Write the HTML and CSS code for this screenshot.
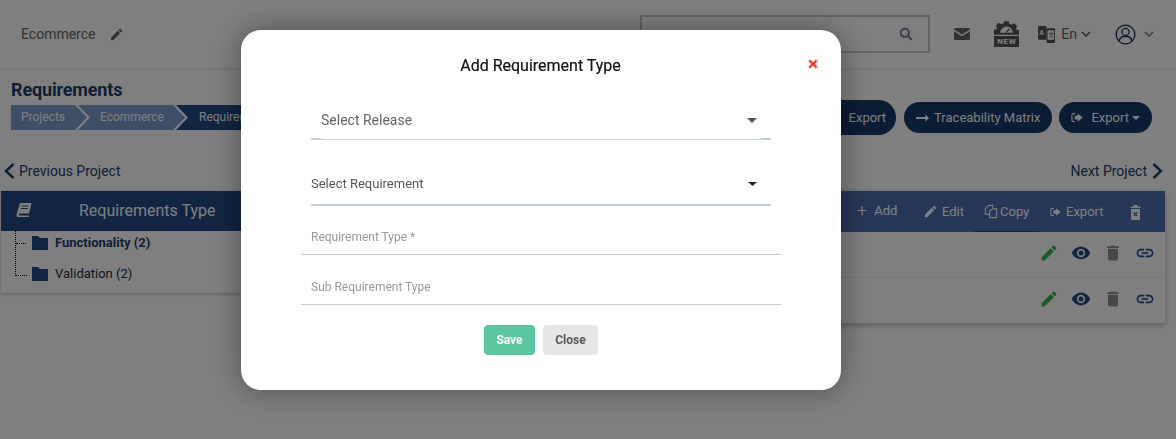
FILE: index.html
```html
<!DOCTYPE html>
<html lang="en">
<head>
<meta charset="utf-8">
<title>Requirements</title>
<link rel="stylesheet" href="styles.css">
</head>
<body>
<svg class="defs" width="0" height="0" aria-hidden="true">
  <symbol id="pencil" viewBox="0 0 24 24"><path d="M3 17.25V21h3.75L17.81 9.94l-3.75-3.75L3 17.25zM20.71 7.04a1 1 0 0 0 0-1.41l-2.34-2.34a1 1 0 0 0-1.41 0l-1.83 1.83 3.75 3.75 1.83-1.83z"/></symbol>
  <symbol id="folder" viewBox="0 0 16 14"><path d="M0 0h6l2 2h8v12H0z"/></symbol>
  <symbol id="exporti" viewBox="0 0 16 14"><path d="M5.500 1H3a2.500 2.500 0 0 0-2.500 2.500v7A2.500 2.500 0 0 0 3 13h2.500v-1.500H3a1 1 0 0 1-1-1v-7a1 1 0 0 1 1-1h2.500z"/><path d="M9 1.500 15.500 7 9 12.500V9.500H5v-5h4z"/></symbol>
  <symbol id="eye" viewBox="0 0 24 24"><path d="M12 4.500C7 4.500 2.730 7.610 1 12c1.730 4.390 6 7.500 11 7.500s9.270-3.110 11-7.500c-1.730-4.390-6-7.500-11-7.500zM12 17a5 5 0 1 1 0-10 5 5 0 0 1 0 10zm0-8a3 3 0 1 0 0 6 3 3 0 0 0 0-6z"/></symbol>
  <symbol id="trash" viewBox="0 0 24 24"><path d="M6 19a2 2 0 0 0 2 2h8a2 2 0 0 0 2-2V7H6v12zM19 4h-3.500l-1-1h-5l-1 1H5v2h14V4z"/></symbol>
  <symbol id="link" viewBox="0 0 24 24"><path d="M3.900 12A3.100 3.100 0 0 1 7 8.900h4V7H7a5 5 0 0 0 0 10h4v-1.900H7A3.100 3.100 0 0 1 3.900 12zM8 13h8v-2H8v2zm9-6h-4v1.900h4a3.100 3.100 0 0 1 0 6.200h-4V17h4a5 5 0 0 0 0-10z"/></symbol>
  <symbol id="caret" viewBox="0 0 10 6" preserveAspectRatio="none"><path d="M0 0h10L5 6z"/></symbol>
  <symbol id="chev" viewBox="0 0 10 6"><path d="M1 1l4 4 4-4" fill="none" stroke="currentColor" stroke-width="1.500"/></symbol>
</svg>

<div class="page">
  <header class="topbar">
    <div class="project">
      <span>Ecommerce</span>
      <svg class="ic14 grey"><use href="#pencil"/></svg>
    </div>
    <div class="top-right">
      <div class="search">
        <svg class="search-ic" viewBox="0 0 24 24"><circle cx="10" cy="10" r="7" fill="none" stroke="currentColor" stroke-width="3.500"/><path d="M15 15l7 7" stroke="currentColor" stroke-width="3.500"/></svg>
      </div>
      <svg class="mail" viewBox="0 0 16 12"><path d="M1.500 0h13A1.500 1.500 0 0 1 16 1.500L8 6.500 0 1.500A1.500 1.500 0 0 1 1.500 0zM0 3.300V10.500A1.500 1.500 0 0 0 1.500 12h13a1.500 1.500 0 0 0 1.500-1.500V3.300L8 8.300z"/></svg>
      <div class="newbadge">
        <svg class="gear" viewBox="0 0 26 14"><path d="M10.500 0h5l.5 2.500 2.500 1 2.500-1.500 3 3-1 2.500.5 1.500H26v5H0V8.500h2.500l.5-1.500-1-2.500 3-3 2.500 1.500 2.500-1z"/><path d="M6.500 12a6.500 6.500 0 0 1 13 0z" fill="#fff"/><path d="M12 11.500l3.500-4 1 1-3.500 3.500z"/></svg>
        <span>NEW</span>
      </div>
      <svg class="lang" viewBox="0 0 16 18"><rect x="0" y="1" width="8" height="13" rx="1"/><rect x="8" y="3" width="8" height="14" rx="1"/><rect x="9" y="5" width="6" height="9" fill="#fff"/><text x="1.300" y="9.500" class="lang-a">A</text><text x="10" y="11.500" class="lang-b">文</text></svg>
      <span class="lang-t">En</span>
      <svg class="chev"><use href="#chev"/></svg>
      <svg class="user" viewBox="0 0 24 24"><circle cx="12" cy="12" r="10.700" fill="none" stroke="currentColor" stroke-width="1.500"/><circle cx="12" cy="9" r="4" fill="none" stroke="currentColor" stroke-width="1.500"/><path d="M4.500 19.500c1-4 4-5.500 7.500-5.500s6.500 1.500 7.500 5.500" fill="none" stroke="currentColor" stroke-width="1.500"/></svg>
      <svg class="chev chev-u"><use href="#chev"/></svg>
    </div>
  </header>

  <section class="subhead">
    <div>
      <h1>Requirements</h1>
      <ol class="crumbs">
        <li class="crumb c1">Projects</li>
        <li class="crumb c2">Ecommerce</li>
        <li class="crumb c3">Requirements</li>
      </ol>
    </div>
    <div class="actions">
      <button class="pill pill-tall"><svg class="ic13"><use href="#exporti"/></svg>Export</button>
      <button class="pill pill-trace"><svg class="arrow" viewBox="0 0 14 8"><path d="M0 3h10V0l4 4-4 4V5H0z"/></svg>Traceability Matrix</button>
      <button class="pill"><svg class="ic13"><use href="#exporti"/></svg>Export<svg class="caret-s"><use href="#caret"/></svg></button>
    </div>
  </section>

  <nav class="pager">
    <a><svg class="pg" viewBox="0 0 11 16"><path d="M9.500 1 2 8l7.500 7" fill="none" stroke="currentColor" stroke-width="2.400"/></svg>Previous Project</a>
    <a>Next Project<svg class="pg" viewBox="0 0 11 16"><path d="M1.500 1 9 8l-7.500 7" fill="none" stroke="currentColor" stroke-width="2.400"/></svg></a>
  </nav>

  <main class="content">
    <aside class="tree-panel">
      <div class="tree-head">
        <svg class="book" viewBox="0 0 16 14"><path d="M4 0h11.500l-2.500 10.500H3.500L2.500 12.500H13V14H2A1.700 1.700 0 0 1 .500 12z"/><path d="M5.500 3h7M5 5.500h7" stroke="#224a85" stroke-width="1"/></svg>
        <span>Requirements Type</span>
      </div>
      <ul class="tree">
        <li class="tree-item strong"><svg class="folder"><use href="#folder"/></svg>Functionality (2)</li>
        <li class="tree-item"><svg class="folder"><use href="#folder"/></svg>Validation (2)</li>
      </ul>
    </aside>
    <section class="table-panel">
      <div class="tools">
        <span class="tool t-add"><span class="plus">+</span>Add</span>
        <span class="tool t-edit"><svg class="ic14"><use href="#pencil"/></svg>Edit</span>
        <span class="tool t-copy"><svg class="copy" viewBox="0 0 16 16"><path d="M5.500 1H10v4h4.500v10h-8V11H1.500V5zM10 1v4M6.500 11V7.500L10 5" fill="none" stroke="currentColor" stroke-width="1.200"/></svg>Copy</span>
        <span class="tool t-exp"><svg class="ic12"><use href="#exporti"/></svg>Export</span>
        <svg class="del" viewBox="0 0 14 18"><path d="M1 3h12v1.500H1zM4.500 1h5v2h-5zM2 5.500h10V17a1 1 0 0 1-1 1H3a1 1 0 0 1-1-1z"/><path d="M5 9.500l4 4M9 9.500l-4 4" stroke="#4f6fb0" stroke-width="1.500"/></svg>
      </div>
      <div class="row">
        <svg class="act green"><use href="#pencil"/></svg>
        <svg class="act navy"><use href="#eye"/></svg>
        <svg class="act dark"><use href="#trash"/></svg>
        <svg class="act navy"><use href="#link"/></svg>
      </div>
      <div class="row">
        <svg class="act green"><use href="#pencil"/></svg>
        <svg class="act navy"><use href="#eye"/></svg>
        <svg class="act dark"><use href="#trash"/></svg>
        <svg class="act navy"><use href="#link"/></svg>
      </div>
    </section>
  </main>
</div>

<div class="overlay"></div>

<div class="modal">
  <div class="modal-head">
    <h2>Add Requirement Type</h2>
    <svg class="close-x" viewBox="0 0 10 10"><path d="M1.300 1.300l7.400 7.400M8.700 1.300L1.300 8.700" stroke="currentColor" stroke-width="2.500"/></svg>
  </div>
  <div class="sel sel-release">
    <span>Select Release</span>
    <svg class="sel-caret"><use href="#caret"/></svg>
  </div>
  <div class="sel sel-req">
    <span>Select Requirement</span>
    <svg class="sel-caret"><use href="#caret"/></svg>
  </div>
  <div class="field f-first">Requirement Type *</div>
  <div class="field f-second">Sub Requirement Type</div>
  <div class="btns">
    <button class="btn save">Save</button>
    <button class="btn close">Close</button>
  </div>
</div>
</body>
</html>
```
FILE: styles.css
```css
* { box-sizing: border-box; }
html, body { margin: 0; padding: 0; }
body {
  width: 1176px;
  height: 439px;
  overflow: hidden;
  background: #fff;
  font-family: Roboto, "Liberation Sans", sans-serif;
  color: #333;
}
.defs { position: absolute; }
svg { display: block; flex: none; fill: currentColor; }
ul, ol { list-style: none; margin: 0; padding: 0; }
h1, h2 { margin: 0; }
button { font-family: inherit; border: 0; }

.page { height: 439px; }

.topbar {
  height: 69px;
  border-bottom: 1px solid #f0f0f0;
  box-shadow: 0 1px 3px rgba(0,0,0,.08);
  display: flex;
  justify-content: space-between;
  align-items: center;
  padding: 0 22px 0 21px;
}
.project { display: flex; align-items: center; gap: 14px; font-size: 14px; color: #666; }
.ic14 { width: 15px; height: 15px; }
.grey { color: #666; }
.top-right { display: flex; align-items: center; }
.search {
  width: 290px;
  height: 38px;
  border: 2px solid #c8c8c8;
  display: flex;
  align-items: center;
  justify-content: flex-end;
  padding-right: 15px;
  color: #7e7e9e;
}
.search-ic { width: 14px; height: 14px; }
.mail { width: 16px; height: 12px; margin-left: 24px; color: #666; }
.newbadge { width: 25px; margin-left: 24px; color: #555; }
.gear { width: 25px; height: 14px; margin: 0; }
.newbadge span {
  display: block;
  background: #555;
  color: #fff;
  font-size: 8px;
  font-weight: 700;
  line-height: 11px;
  letter-spacing: .6px;
  text-align: center;
  margin-top: 1px;
}
.lang { width: 17px; height: 19px; margin-left: 19px; color: #555; }
.lang-a { font-size: 6px; font-weight: 700; fill: #fff; }
.lang-b { font-family: "Noto Sans CJK SC", sans-serif; font-size: 5px; fill: #555; }
.lang-t { font-size: 14px; color: #666; margin-left: 6px; }
.chev { width: 10px; height: 6px; margin-left: 4px; color: #555; }
.user { width: 21px; height: 21px; margin-left: 24px; color: #1b3258; }
.chev-u { margin-left: 8px; color: #777; }

.subhead {
  display: flex;
  justify-content: space-between;
  padding: 10px 24px 0 11px;
  height: 93px;
}
h1 { font-size: 18px; font-weight: 700; line-height: 21px; color: #1c3d6e; letter-spacing: -.15px; }
.crumbs { display: flex; margin-top: 5px; }
.crumb {
  height: 25px;
  line-height: 25px;
  font-size: 12px;
  color: #fff;
  background: #7a9ccc;
}
.c1 {
  width: 76px;
  padding-left: 10px;
  clip-path: polygon(0 0, calc(100% - 12px) 0, 100% 50%, calc(100% - 12px) 100%, 0 100%);
}
.c2 {
  width: 107px;
  margin-left: -9px;
  padding-left: 22px;
  clip-path: polygon(0 0, calc(100% - 12px) 0, 100% 50%, calc(100% - 12px) 100%, 0 100%, 12px 50%);
}
.c3 {
  width: 130px;
  margin-left: -9px;
  padding-left: 23px;
  background: #224a85;
  clip-path: polygon(0 0, 100% 0, 100% 100%, 0 100%, 12px 50%);
}

.actions { display: flex; align-items: center; gap: 8px; margin-top: 21px; height: 35px; }
.pill {
  height: 31px;
  border-radius: 16px;
  background: #16386a;
  color: #fff;
  font-size: 13px;
  display: flex;
  align-items: center;
  gap: 8px;
  padding: 0 12px;
}
.pill-tall { height: 35px; border-radius: 18px; padding: 0 10px 0 60px; }
.pill-trace { gap: 5px; margin-right: -1px; }
.ic13 { width: 12px; height: 11px; }
.arrow { width: 13px; height: 8px; }
.caret-s { width: 8px; height: 4px; margin-left: -5px; }

.pager {
  display: flex;
  justify-content: space-between;
  align-items: center;
  height: 20px;
  padding: 0 13px 0 4px;
  margin-top: -1px;
  font-size: 14px;
  color: #1d3c6b;
  margin-bottom: 10px;
}
.pager a { display: flex; align-items: center; gap: 4px; }
.pager a:last-child { gap: 5px; }
.pg { width: 11px; height: 16px; }

.content { display: flex; padding: 0 11px 0 1px; align-items: flex-start; }
.tree-panel { width: 300px; box-shadow: 0 1px 4px rgba(0,0,0,.25); background: #fff; border-radius: 3px 0 0 0; }
.tree-head {
  height: 40px;
  background: #224a85;
  color: #fff;
  display: flex;
  align-items: center;
  padding: 0 0 2px 15px;
  font-size: 16px;
}
.book { width: 16px; height: 14px; color: #fff; }
.tree-head span { margin-left: 47px; }
.tree {
  padding: 4px 0 0 31px;
  position: relative;
  height: 62px;
  font-size: 13px;
  color: #1e2a3a;
  display: flex;
  flex-direction: column;
  gap: 15px;
}
.tree::before {
  content: "";
  position: absolute;
  left: 14px;
  top: 0;
  width: 11px;
  height: 44px;
  border-left: 1px dotted #000;
  border-bottom: 1px dotted #000;
}
.tree::after {
  content: "";
  position: absolute;
  left: 15px;
  top: 12px;
  width: 10px;
  border-top: 1px dotted #000;
}
.tree-item { display: flex; align-items: center; gap: 7px; height: 16px; line-height: 16px; }
.tree-item.strong { font-weight: 700; color: #1c3d6e; }
.folder { width: 16px; height: 14px; color: #224a85; }

.table-panel { flex: 1; box-shadow: 0 2px 6px rgba(0,0,0,.3); background: #fff; border-radius: 0 3px 0 0; }
.tools {
  height: 41px;
  background: #4f6fb0;
  color: #fff;
  display: flex;
  align-items: center;
  padding-left: 556px;
  font-size: 13px;
}
.tool { display: flex; align-items: center; height: 41px; }
.t-add { width: 66px; gap: 7px; padding-bottom: 2px; }
.plus { font-size: 18px; font-weight: 300; line-height: 18px; }
.t-edit { width: 51px; gap: 4px; padding-bottom: 1px; }
.t-copy { width: 65px; gap: 2px; padding: 0 0 1px 10px; box-shadow: inset 0 -1px 0 #224a85; }
.copy { width: 14px; height: 15px; fill: none; }
.t-exp { width: 90px; padding: 0 0 0 11px; gap: 5px; }
.ic12 { width: 11px; height: 10px; }
.del { width: 13px; height: 16px; }
.row {
  height: 46px;
  display: flex;
  align-items: center;
  justify-content: flex-end;
  gap: 12px;
  padding: 0 10px 4px 0;
  border-top: 1px solid #eee;
}
.tools + .row { height: 45px; border-top: 0; }
.act { width: 20px; height: 20px; }
.green { color: #38b050; }
.navy { color: #224a85; }
.dark { color: #909090; }

.overlay { position: fixed; inset: 0; background: rgba(0,0,0,.5); }

.modal {
  position: fixed;
  left: 241px;
  top: 30px;
  width: 600px;
  height: 360px;
  background: #fff;
  border-radius: 20px;
  box-shadow: 0 0 30px rgba(0,0,0,.4);
  padding: 0 60px;
}
.modal-head { display: flex; align-items: center; justify-content: center; height: 70px; position: relative; }
h2 { font-size: 16px; font-weight: 400; color: #111; -webkit-text-stroke: .2px #111; margin: 1px 1px 0 0; }
.close-x { position: absolute; right: -37px; top: 29px; width: 10px; height: 10px; color: #f44336; }
.sel {
  display: flex;
  align-items: center;
  justify-content: space-between;
  margin: 0 10px;
  color: #666;
}
.sel-release {
  height: 40px;
  font-size: 14px;
  padding: 0 14px 0 10px;
  background:
    linear-gradient(#c2d0dd, #c2d0dd) left bottom / 10px 2px no-repeat,
    linear-gradient(#c2d0dd, #c2d0dd) right bottom / 10px 2px no-repeat,
    linear-gradient(#c8d4e0, #c8d4e0) center bottom / 100% 1px no-repeat;
}
.sel-req {
  height: 41px;
  margin-top: 25px;
  font-size: 13px;
  color: #555;
  padding: 0 14px 2px 0;
  border-bottom: 2px solid #c2d0dd;
}
.sel-caret { width: 10px; height: 5px; color: #555; }
.sel-req .sel-caret { width: 9px; height: 4px; color: #222; }
.field {
  height: 31px;
  line-height: 19px;
  border-bottom: 1px solid #ccc;
  padding: 3px 10px 0;
  font-size: 12px;
  color: #999;
  margin-top: 19px;
}
.f-first { height: 30px; }
.f-second { padding-top: 4px; }
.btns { display: flex; justify-content: center; gap: 8px; margin-top: 20px; }
.btn { height: 30px; border-radius: 4px; font-size: 12px; font-weight: 700; padding: 0; }
.save { width: 51px; background: #5cc69f; color: #fff; }
.close { width: 55px; background: #e6e6e6; color: #555; }
```
